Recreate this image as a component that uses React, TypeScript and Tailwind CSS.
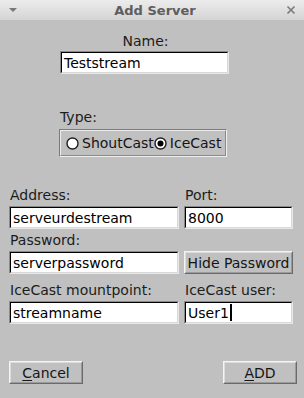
import React from "react";

const font = { fontFamily: '"DejaVu Sans", sans-serif' };

function Input({ value, cursor, className }: { value: string; cursor?: boolean; className?: string }) {
  return (
    <div className={`h-[23px] border border-t-[#8a8a8a] border-l-[#8a8a8a] border-b-[#e8e8e8] border-r-[#e8e8e8] ${className ?? ""}`}>
      <div className="h-full border border-t-black border-l-black border-b-[#d8d8d8] border-r-[#d8d8d8] bg-white flex items-center pl-[2px] text-[14px] text-black leading-none whitespace-nowrap overflow-hidden">
        <span>{value}</span>
        {cursor && <span className="inline-block w-[2px] h-[17px] bg-black ml-[1px]" />}
      </div>
    </div>
  );
}

function Button({ children, className }: { children: React.ReactNode; className?: string }) {
  return (
    <div className={`h-[23px] border border-t-[#f4f4f4] border-l-[#f4f4f4] border-b-[#6a6a6a] border-r-[#6a6a6a] ${className ?? ""}`}>
      <div className="h-full border border-t-[#dcdcdc] border-l-[#dcdcdc] border-b-[#9a9a9a] border-r-[#9a9a9a] bg-[#c0c0c0] flex items-center justify-center text-[14px] text-[#151515] leading-none whitespace-nowrap">
        {children}
      </div>
    </div>
  );
}

function Radio({ checked }: { checked?: boolean }) {
  return (
    <svg width="13" height="13" viewBox="0 0 13 13" className="shrink-0">
      <circle cx="6.5" cy="6.5" r="5.5" fill="#ffffff" stroke="#202020" strokeWidth="1.4" />
      {checked && <circle cx="6.5" cy="6.5" r="3" fill="#000000" />}
    </svg>
  );
}

export default function App() {
  return (
    <div className="w-[304px] h-[398px] bg-[#c0c0c0] overflow-hidden flex flex-col" style={font}>
      {/* Title bar */}
      <div className="h-[20px] shrink-0 bg-gradient-to-b from-[#ececec] to-[#d4d4d4] flex items-center justify-between px-[8px]">
        <svg width="10" height="8" viewBox="0 0 10 8">
          <path d="M1 2 L9 2 L5 6 Z" fill="#777777" />
        </svg>
        <span className="text-[13px] font-bold text-[#5e5e5e] leading-none ml-[6px]">Add Server</span>
        <svg width="10" height="10" viewBox="0 0 10 10">
          <path d="M1.5 1.5 L8.5 8.5 M8.5 1.5 L1.5 8.5" stroke="#7a7a7a" strokeWidth="1.6" />
        </svg>
      </div>

      {/* Name */}
      <div className="mt-[13px] ml-[60px] w-[169px] flex flex-col">
        <div className="h-[17px] text-[14px] leading-[17px] text-[#1c1c1c] text-center pl-[2px]">Name:</div>
        <Input value="Teststream" className="mt-[1px]" />
      </div>

      {/* Type */}
      <div className="mt-[35px] ml-[59px] w-[168px] flex flex-col">
        <div className="h-[17px] text-[14px] leading-[17px] text-[#1c1c1c] pl-[1px]">Type:</div>
        <div className="mt-[3px] h-[28px] border border-t-[#7a7a7a] border-l-[#7a7a7a] border-b-[#f0f0f0] border-r-[#f0f0f0]">
          <div className="h-full border border-t-[#ececec] border-l-[#ececec] border-b-[#8a8a8a] border-r-[#8a8a8a] flex items-center pl-[5px] text-[14px] leading-none text-[#151515]">
            <Radio />
            <span className="ml-[3px]">ShoutCast</span>
            <Radio checked />
            <span className="ml-[3px]">IceCast</span>
          </div>
        </div>
      </div>

      {/* Address / Port */}
      <div className="mt-[30px] mx-[9px] grid grid-cols-[170px_109px] gap-x-[5px]">
        <div className="h-[17px] text-[14px] leading-[17px] text-[#1c1c1c] pl-[1px]">Address:</div>
        <div className="h-[17px] text-[14px] leading-[17px] text-[#1c1c1c] pl-[1px]">Port:</div>
        <Input value="serveurdestream" className="mt-[2px]" />
        <Input value="8000" className="mt-[2px]" />

        <div className="mt-[3px] h-[17px] text-[14px] leading-[17px] text-[#1c1c1c] pl-[1px] col-span-2">Password:</div>
        <Input value="serverpassword" className="mt-[2px]" />
        <Button className="mt-[2px]">Hide Password</Button>

        <div className="mt-[8px] h-[17px] text-[14px] leading-[17px] text-[#1c1c1c] pl-[1px]">IceCast mountpoint:</div>
        <div className="mt-[8px] h-[17px] text-[14px] leading-[17px] text-[#1c1c1c] pl-[1px]">IceCast user:</div>
        <Input value="streamname" className="mt-[2px]" />
        <Input value="User1" cursor className="mt-[2px]" />
      </div>

      {/* Buttons */}
      <div className="mt-[37px] mx-[9px] flex justify-between">
        <Button className="w-[74px]">
          <span><span className="underline underline-offset-2">C</span>ancel</span>
        </Button>
        <Button className="w-[74px] mr-[-2px]">
          <span><span className="underline underline-offset-2">A</span>DD</span>
        </Button>
      </div>
    </div>
  );
}
